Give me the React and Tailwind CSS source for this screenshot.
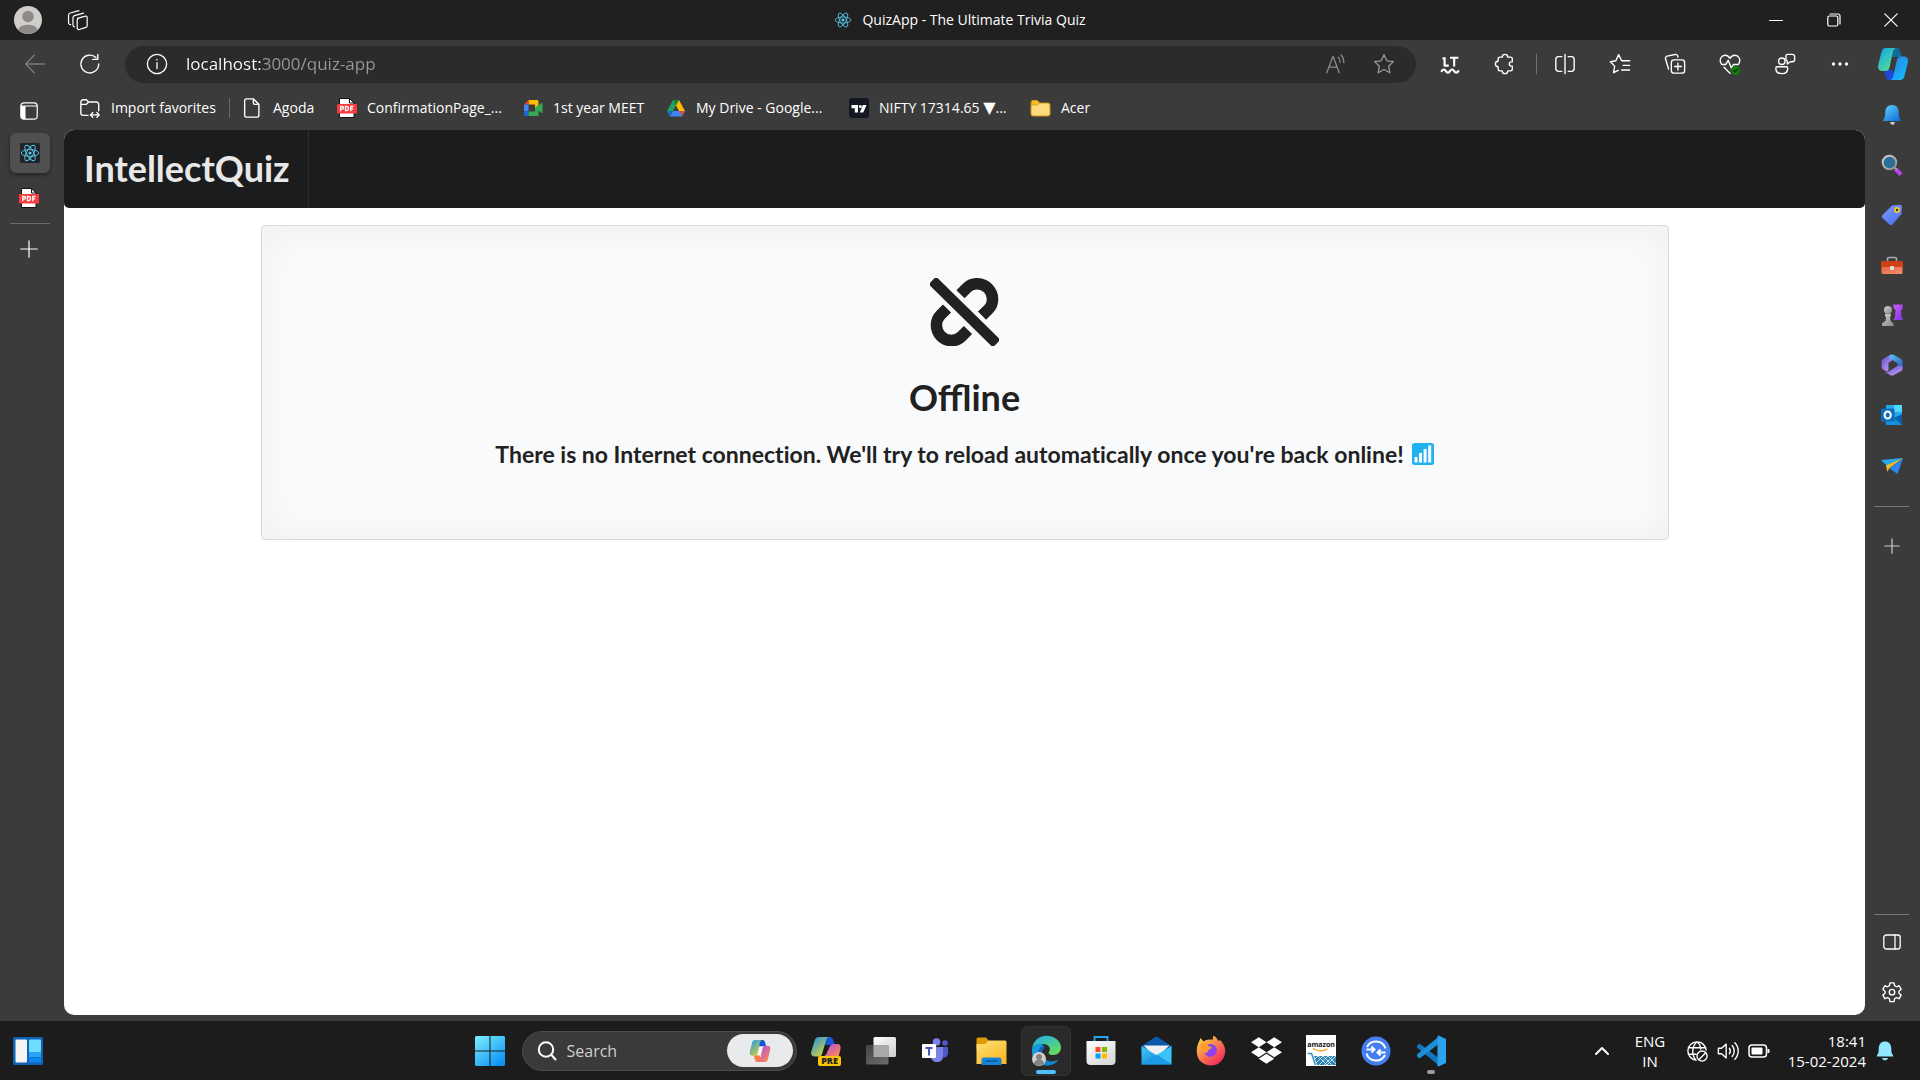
import React from "react";
import { FaDropbox } from "react-icons/fa";

function Line({ children, size = 22, box = 24, w = 1.5, className = "" }) {
  return (
    <svg
      width={size}
      height={size}
      viewBox={`0 0 ${box} ${box}`}
      fill="none"
      stroke="currentColor"
      strokeWidth={w}
      strokeLinecap="round"
      strokeLinejoin="round"
      className={`shrink-0 ${className}`}
      aria-hidden="true"
    >
      {children}
    </svg>
  );
}

function Art({ children, w = 22, h = w, vb = "0 0 24 24", className = "" }) {
  return (
    <svg width={w} height={h} viewBox={vb} fill="none" className={`shrink-0 ${className}`} aria-hidden="true">
      {children}
    </svg>
  );
}

function Gradients() {
  const stops = {
    gBell: ["#5fd4fb", "#1173dd"],
    gTag: ["#7fa0ff", "#4c6ef0"],
    gBox: ["#e8613a", "#f48a68"],
    gRook: ["#d25bfa", "#8038e8"],
    gPawn: ["#d0d0d0", "#8d8d8d"],
    gWin: ["#7cf0ff", "#0a93f5"],
    gFolder: ["#ffe07a", "#fbb91f"],
    gEdge: ["#1fa9f0", "#66e05a"],
    gEdgeDark: ["#0c4f9c", "#1290d8"],
    gFox: ["#ffe43d", "#f3205f"],
    gFoxIn: ["#6b4df0", "#a53bf0"],
    gMail: ["#3fd0fb", "#1479d4"],
    gCoGreen: ["#0aa4ee", "#5fe08a"],
    gCoBlue: ["#2b7be8", "#16bdfa"],
    gCoRain: ["#1492f5", "#e7d52b"],
    gCoPink: ["#b04af0", "#ff8a4a"],
    gOffA: ["#5b4fd0", "#c79bf2"],
    gOffB: ["#56c8f5", "#3358c8"],
    gStack: ["#ffffff", "#cfcfcf"],
    gGray: ["#444444", "#6a6a6a"],
    gBag: ["#fdfdfd", "#d8d8d8"],
    gHat: ["#d5d5d5", "#8f8f8f"],
  };
  return (
    <svg width="0" height="0" className="absolute" aria-hidden="true">
      <defs>
        {Object.entries(stops).map(([id, [a, b]]) => (
          <linearGradient key={id} id={id} x1="0" y1="0" x2="0.8" y2="1">
            <stop offset="0" stopColor={a} />
            <stop offset="1" stopColor={b} />
          </linearGradient>
        ))}
      </defs>
    </svg>
  );
}

const ReactLogo = ({ size = 18, box = false }) => (
  <Art w={size} vb="-12 -12 24 24">
    {box && <rect x="-12" y="-12" width="24" height="24" rx="2" fill="#20232a" />}
    <g stroke="#5cc9e6" strokeWidth="1.1">
      <ellipse rx="10.5" ry="4.1" />
      <ellipse rx="10.5" ry="4.1" transform="rotate(60)" />
      <ellipse rx="10.5" ry="4.1" transform="rotate(120)" />
    </g>
    <circle r="1.9" fill="#5cc9e6" />
  </Art>
);

const PdfIcon = () => (
  <Art w={20} vb="0 0 20 20">
    <path d="M2.500.5h10l4.500 4.500v14.500h-14.500z" fill="#fff" stroke="#111" />
    <path d="M12.500.5v4.500h4.500z" fill="#fff" stroke="#111" />
    <rect x="0" y="6" width="20" height="9.500" rx="1" fill="#f73c3f" />
    <g stroke="#fff" strokeWidth="1.300">
      <path d="M3.700 13.200V8.500h1.500a1.300 1.300 0 0 1 0 2.700H3.700M8.500 8.500v4.200h.9a2.100 2.100 0 0 0 0-4.200zM13.800 13.200V8.500h2.700M13.800 10.800h2.300" />
    </g>
  </Art>
);

const CopilotArt = ({ w = 30, h = 32, rainbow = false }) => (
  <Art w={w} h={h} vb="0 0 30 32">
    <path d="M10 0h9c2 0 3 2 3.500 4l1.500 5h-7l-5 0z" fill={rainbow ? "#1557d8" : "#126a9a"} />
    <path d="M20 32h-9c-2 0-3-2-3.500-4L6 22h8z" fill={rainbow ? "#ff7a45" : "#1b49d8"} />
    <path d="M8 0h9.500c-2 1-2.500 3-3.200 6l-2.500 12.500c-.7 3-2 4.500-4.500 4.500H4c-3.500 0-4.500-3-3.700-6.500L3.500 4C4.200 1.300 5.500 0 8 0z" fill={rainbow ? "url(#gCoRain)" : "url(#gCoGreen)"} />
    <path d="M22 32h-9.500c2-1 2.500-3 3.200-6L18.700 13c.7-3 2-4.500 4.500-4.500H26c3.500 0 4.500 3 3.700 6.500L26.500 28c-.7 2.700-2 4-4.500 4z" fill={rainbow ? "url(#gCoPink)" : "url(#gCoBlue)"} />
    {rainbow && <path d="M15 10h2.500l-3.300 12h-2.500z" fill="#fff" />}
  </Art>
);

const MeetIcon = () => (
  <Art w={20} vb="0 0 20 20">
    <path d="M5.500 2h8.500c1 0 1.500.5 1.500 1.500v4L12 10V6.500H5.500z" fill="#fbbc04" />
    <path d="M5.500 2v4.500H1z" fill="#ea4335" />
    <path d="M1 6.500h4.500v7H1z" fill="#4285f4" />
    <path d="M1 13.500h4.500V18H2.500C1.500 18 1 17.500 1 16.500z" fill="#1967d2" />
    <path d="M5.500 13.500H12V10l3.500 2.500v4c0 1-.5 1.500-1.500 1.500H5.500zM15.500 7.500L18.500 5c.5-.4 1-.1 1 .5v9c0 .6-.5.900-1 .5l-6.500-5z" fill="#34a853" />
  </Art>
);

const DriveIcon = () => (
  <Art w={20} vb="0 0 20 20">
    <path d="M7 2h6l6 11h-6z" fill="#fbbc04" />
    <path d="M7 2l3 5.500L4 18.500 1 13z" fill="#1ea362" />
    <path d="M7 13h12l-3 5.500H4z" fill="#4285f4" />
    <path d="M13 2l-3 5.500L7 2z" fill="#188038" />
    <path d="M7 13l-3 5.500L1 13z" fill="#1967d2" />
    <path d="M13 13h6l-3 5.500z" fill="#ea4335" opacity=".8" />
  </Art>
);

const TradingIcon = () => (
  <Art w={20} vb="0 0 20 20">
    <rect width="20" height="20" rx="3" fill="#131722" />
    <path d="M2.500 7H9v7.500H5.800v-4.300H2.500zM13.800 7h3.700l-3.200 7.500h-3.500z" fill="#fff" />
    <circle cx="11.300" cy="8.600" r="1.500" fill="#fff" />
  </Art>
);

const YellowFolder = () => (
  <Art w={21} h={20} vb="0 0 21 20">
    <path d="M1 4.500A2 2 0 0 1 3 2.500h4l2.500 2.500H18a2 2 0 0 1 2 2v9a2 2 0 0 1-2 2H3a2 2 0 0 1-2-2z" fill="#ffdb7d" stroke="#c99412" />
    <path d="M1.500 7h6L9.500 5 7 2.500H3A1.500 1.500 0 0 0 1.500 4z" fill="#f5c026" stroke="#c99412" strokeWidth=".8" />
  </Art>
);

const ImportIcon = () => (
  <Line size={22} w={1.5}>
    <path d="M10 20H4.500A2.500 2.500 0 0 1 2 17.500v-12A2.500 2.500 0 0 1 4.500 3H8l2.500 2.500H19a2.500 2.500 0 0 1 2.500 2.500v7M2 8h6l2.500-2.500M12.500 19.500h9.500M15 17l-2.500 2.500L15 22M19.500 17l2.500 2.500-2.500 2.500" />
  </Line>
);

const PageIcon = () => (
  <Line size={22} w={1.5}>
    <path d="M6 2h7.500l6 6v12a2 2 0 0 1-2 2h-11.500a2 2 0 0 1-2-2V4a2 2 0 0 1 2-2zM13.500 2v4.500A1.500 1.500 0 0 0 15 8h4.500" />
  </Line>
);

const niftyLabel = (
  <span>
    NIFTY 17314.65 <span className="font-['DejaVu_Sans',sans-serif] text-base leading-4">▼</span>...
  </span>
);

const favorites = [
  { id: "agoda", label: "Agoda", icon: <PageIcon />, width: "w-[96px]" },
  { id: "confirmation", label: "ConfirmationPage_...", icon: <PdfIcon />, width: "w-[186px]" },
  { id: "meet", label: "1st year MEET", icon: <MeetIcon />, width: "w-[143px]" },
  { id: "drive", label: "My Drive - Google...", icon: <DriveIcon />, width: "w-[183px]" },
  { id: "nifty", label: niftyLabel, icon: <TradingIcon />, width: "w-[181px]" },
  { id: "acer", label: "Acer", icon: <YellowFolder />, width: "w-[70px]" },
];

function IconButton({ label, className = "", children }) {
  return (
    <button type="button" aria-label={label} className={`flex shrink-0 items-center justify-center ${className}`}>
      {children}
    </button>
  );
}

function TitleBar() {
  return (
    <header className="flex h-10 shrink-0 items-center bg-[#202020]">
      <div className="flex flex-1 items-center">
        <IconButton label="Profile" className="w-14">
          <Art w={28}>
            <circle cx="12" cy="12" r="12" fill="#d0cecb" />
            <circle cx="12" cy="9" r="5" fill="#8d8a88" />
            <path d="M3.500 20.400a9 6.500 0 0 1 17 0A12 12 0 0 1 3.500 20.400z" fill="#8d8a88" />
          </Art>
        </IconButton>
        <IconButton label="Workspaces" className="w-11">
          <Line size={22} w={1.3}>
            <path d="M11.500 10.300l8.500-2.500a1.500 1.500 0 0 1 2 1.400v9a2 2 0 0 1-1.500 1.900l-7 2.300a1.800 1.800 0 0 1-2.400-1.700v-8.500a2 2 0 0 1 1.400-1.900zM8 19.500a2 2 0 0 1-1.500-2V9.500a2.500 2.500 0 0 1 1.700-2.300L18 4.500M4 17a2 2 0 0 1-2.300-2V6.800a2.500 2.500 0 0 1 1.800-2.400L13 1.700" />
          </Line>
        </IconButton>
      </div>
      <div className="flex items-center gap-2.5 text-sm text-white">
        <ReactLogo />
        <h1>QuizApp - The Ultimate Trivia Quiz</h1>
      </div>
      <div className="flex flex-1 justify-end">
        <IconButton label="Minimize" className="h-10 w-[58px]">
          <Line size={14} box={14} w={1}><path d="M.5 7.500h13" /></Line>
        </IconButton>
        <IconButton label="Restore" className="h-10 w-[57px]">
          <Line size={14} box={14} w={1.200}><rect x=".8" y="3" width="10" height="10" rx="1.500" /><path d="M3 1h8a2 2 0 0 1 2 2v8" /></Line>
        </IconButton>
        <IconButton label="Close" className="h-10 w-[58px]">
          <Line size={14} box={14} w={1.200}><path d="M.8.8l12.400 12.400M13.200.8L.8 13.200" /></Line>
        </IconButton>
      </div>
    </header>
  );
}

function Toolbar() {
  return (
    <div className="flex h-12 shrink-0 items-center">
      <IconButton label="Back" className="ml-2 w-[54px] text-[#7c7c7c]">
        <Line><path d="M22 12H2M11 2.500L2 12l9 9.500" /></Line>
      </IconButton>
      <IconButton label="Refresh" className="w-[55px]">
        <Line><path d="M21.500 12A9.700 9.700 0 1 1 18.500 5M20.500 1.500V7H15" /></Line>
      </IconButton>
      <div className="ml-2 flex h-[37px] flex-1 items-center rounded-full bg-[#2b2b2b] pl-[21px] pr-4">
        <IconButton label="Site information">
          <Line w={1.400}><circle cx="12" cy="12" r="10.500" /><path d="M12 10.500v6.500M12 7v.5" /></Line>
        </IconButton>
        <input
          aria-label="Address"
          defaultValue="localhost:3000/quiz-app"
          className="ml-[18px] min-w-0 flex-1 bg-[linear-gradient(90deg,#fff_75px,#989898_75px)] bg-clip-text text-[17px] text-transparent outline-none"
        />
        <IconButton label="Read aloud" className="w-12 text-[#8c8c8c]">
          <Line w={1.400}><path d="M2 21.500L8.500 4h.5l6.500 17.500M4.500 15.500h8.500M14.500 4.500a8 8 0 0 1 2 5.500M17.500 2a12 12 0 0 1 3 8.500" /></Line>
        </IconButton>
        <IconButton label="Add to favorites" className="ml-2 w-8 text-[#9a9a9a]">
          <Star />
        </IconButton>
      </div>
      <div className="ml-1.5 flex items-center">
        <IconButton label="LanguageTool" className="w-[55px]">
          <Line size={20} w={2.600}>
            <path d="M5.500 4v10h5M12 4.500h10M17 4.500v10.500M3 5.300h3" strokeLinecap="butt" />
            <path d="M2 20.500c1.700-2.500 3.500-2.500 5 0s3.500 2.500 5 0 3.500-2.500 5 0 3.500 2.500 5 0" />
          </Line>
        </IconButton>
        <IconButton label="Extensions" className="w-[55px]">
          <Line><path d="M6.500 4.500H9a3 3 0 0 1 6 0h3a2 2 0 0 1 2 2v3.200h-1a2.300 2.300 0 0 0 0 4.600h1v3.200a2 2 0 0 1-2 2h-3a3 3 0 0 1-6 0H6.500a2 2 0 0 1-2-2V15a3 3 0 0 1 0-6V6.500a2 2 0 0 1 2-2z" /></Line>
        </IconButton>
        <div className="ml-1 h-5 w-px bg-[#707070]" />
        <IconButton label="Split screen" className="w-[55px]">
          <Line><path d="M12 1.500v21M8.500 4H5a3 3 0 0 0-3 3v10a3 3 0 0 0 3 3h3.500M15.500 4H19a3 3 0 0 1 3 3v10a3 3 0 0 1-3 3h-3.500" /></Line>
        </IconButton>
        <IconButton label="Favorites" className="w-[55px]">
          <Line><path d="M13.800 8.500L10.500 1.800 7.500 8.500 1.500 9.500l4.700 4.800L5 21.500l5-2.600M13.800 8.500h8.700M15.500 13.500h7M13.800 18.500h8.700" /></Line>
        </IconButton>
        <IconButton label="Collections" className="w-[55px]">
          <Line><rect x="8" y="7.500" width="14.500" height="14.500" rx="3" /><path d="M15.200 11v7.500M11.500 14.700H19M5 17.500L1.700 6.500a2.500 2.500 0 0 1 1.700-3.100L12 1.600a2.500 2.500 0 0 1 3 1.900l.2 1" /></Line>
        </IconButton>
        <IconButton label="Browser essentials" className="w-[55px]">
          <Line>
            <path d="M2.500 12C-.5 6.500 3 2.500 6.800 2.500c2.400 0 4.200 1.500 5.200 3.500 1-2 2.800-3.500 5.200-3.500 3.800 0 7.300 4 4.300 9.500M3 12.500h4.500L10 8l3.500 8.500 2.200-4H21M5.500 15.500L12 22" />
            <circle cx="18" cy="19" r="5" fill="#107c10" stroke="none" />
            <path d="M16 19l1.500 1.500L20.300 17.500" stroke="#0a3d0a" />
          </Line>
        </IconButton>
        <IconButton label="Share" className="w-[55px]">
          <Line><circle cx="8.500" cy="9" r="3.500" /><path d="M3.500 15h10a1.500 1.500 0 0 1 1.500 1.500c0 3.500-2.500 6-6.500 6S2 20 2 16.500A1.500 1.500 0 0 1 3.500 15zM15 1.500h5a2.500 2.500 0 0 1 2.500 2.500v3A2.500 2.500 0 0 1 20 9.500h-2L14.500 12V9L13 7V3.500a2 2 0 0 1 2-2z" /></Line>
        </IconButton>
        <IconButton label="Settings and more" className="w-[55px]">
          <Art w={18} vb="0 0 18 18"><g fill="#fff"><circle cx="2.500" cy="9" r="1.700" /><circle cx="9" cy="9" r="1.700" /><circle cx="15.500" cy="9" r="1.700" /></g></Art>
        </IconButton>
        <IconButton label="Copilot" className="w-[53px] pr-0.5">
          <CopilotArt />
        </IconButton>
      </div>
    </div>
  );
}

const Star = () => (
  <Line w={1.400}><path d="M12 1.800l3.100 6.700 7.200.9-5.300 5 1.400 7.200L12 18l-6.400 3.600L7 14.400l-5.300-5 7.200-.9z" /></Line>
);

function LeftRail() {
  return (
    <nav aria-label="Vertical tabs" className="flex w-16 shrink-0 flex-col items-start pl-2.5">
      <IconButton label="Tab actions" className="h-[45px] w-[38px]">
        <Art w={18} vb="0 0 18 18">
          <path d="M1 4h16M4 .8h10A3.200 3.200 0 0 1 17.200 4v10a3.200 3.200 0 0 1-3.200 3.200H4A3.200 3.200 0 0 1 .8 14V4A3.200 3.200 0 0 1 4 .8z" stroke="#fff" strokeWidth="1.200" />
          <path d="M1 4h4.500v13H3a2 2 0 0 1-2-2z" fill="#fff" />
        </Art>
      </IconButton>
      <IconButton label="QuizApp" className="size-10 rounded-md bg-[#505050] shadow-[0_2px_4px_rgba(0,0,0,0.4)]">
        <ReactLogo size={20} box />
      </IconButton>
      <IconButton label="PDF" className="h-[50px] w-[38px]">
        <PdfIcon />
      </IconButton>
      <div className="h-px w-10 bg-[#6b6b6b]" />
      <IconButton label="New tab" className="h-[50px] w-[38px]">
        <Line size={18} box={18} w={1.200}><path d="M9 .8v16.400M.8 9h16.400" /></Line>
      </IconButton>
    </nav>
  );
}

const sideApps = [
  ["Notifications", <Art w={20} h={24} vb="0 0 20 24"><path d="M8 19h5c-.5 2-1.300 2.800-2.500 2.800S8.500 21 8 19z" fill="#c9c9c9" /><path d="M10 2c4 0 6.500 2.800 6.700 6.500l.3 5 2 4.500H1l2-4.500.3-5C3.500 4.800 6 2 10 2z" fill="url(#gBell)" /></Art>],
  ["Search", <Art w={22} vb="0 0 22 22"><path d="M14.500 15l5.500 5.500" stroke="#c33cf0" strokeWidth="4" /><path d="M12 12l4 4" stroke="#9a9a9a" strokeWidth="2" /><circle cx="8.500" cy="8.500" r="6.800" fill="#286f93" stroke="url(#gHat)" strokeWidth="2" /></Art>],
  ["Shopping", <Art w={22} vb="0 0 22 22"><path d="M11 1.500l8-.8c1.200 0 2 .8 2 2l-.5 7.300-9 10.500c-1 .9-2 .9-3 0l-7-6.500c-.9-1-.9-2 0-3z" fill="url(#gTag)" /><circle cx="16" cy="6" r="2.100" stroke="#f7cb21" strokeWidth="1.800" fill="#333" /></Art>],
  ["Tools", <Art w={24} h={22} vb="0 0 24 22"><path d="M7.500 8V5a1.500 1.500 0 0 1 1.500-1.500h6A1.500 1.500 0 0 1 16.500 5v3" stroke="#aaa" strokeWidth="1.600" /><rect x="1.500" y="10" width="21" height="10" rx="1.500" fill="url(#gBox)" /><rect x="1" y="7" width="22" height="6" rx="1" fill="#cf4016" /><rect x="10" y="12" width="4" height="4" rx="1" fill="#ddd" /></Art>],
  ["Games", <Art w={24} h={24} vb="0 0 24 24"><path d="M13.500 1l2.500 1 2-1 2 1 2.500-1v5l-1.500 2 .5 6 2 3h-10l1.500-3 .5-7-2-2z" fill="url(#gRook)" /><circle cx="8" cy="7" r="4" fill="url(#gPawn)" /><path d="M5 11h6v2l-1 1 .5 4 3 2.500V23H2v-2.500L5.500 18l.5-4-1-1z" fill="url(#gPawn)" /></Art>],
  ["Microsoft 365", <Art w={22} vb="0 0 22 22"><path d="M.7 7.500c0-1 .5-2 1.500-2.600L9 1l2.500 1v4L7.500 9v7.500l-2 1-3.500-2c-.8-.5-1.300-1.300-1.300-2.300z" fill="url(#gOffA)" /><path d="M8.500 1.200C10 .3 12 .3 13.500 1.200l6.500 3.800c1 .7 1.500 1.500 1.500 2.500v7.500l-5-2.500V9l-8-4.500z" fill="url(#gOffB)" /><path d="M21.500 12v3c0 1-.5 1.500-1.300 2L13 21c-1.300.7-2.700.7-4 0l-5.500-3.200c1 .4 3 .2 4-.4l9-5.400z" fill="url(#gOffA)" /></Art>],
  ["Outlook", <Art w={22} vb="0 0 22 22"><path d="M5 1h16v13H5z" fill="#28a8ea" /><path d="M13 1h8v7h-8z" fill="#50d9ff" /><path d="M4 11l9 3 8-3v10H5z" fill="#1490df" /><path d="M13 14l8-4v11z" fill="#0a5ca8" /><rect x="0" y="4.500" width="13.500" height="13" rx="1.200" fill="#0f6cbd" /><ellipse cx="6.700" cy="11" rx="3.100" ry="3.500" stroke="#fff" strokeWidth="2" /></Art>],
  ["Drop", <Art w={22} vb="0 0 22 22"><path d="M0 6L22 4 6 12z" fill="#2aa6ee" /><path d="M5 11.500L22 4 8 14.500 6.500 18z" fill="#f6bd27" /><path d="M22 4l-5.500 16-8-5.500z" fill="#2e86ef" /></Art>],
];

function RightRail() {
  return (
    <aside className="flex w-[55px] shrink-0 flex-col items-center pt-0.5 pr-0.5">
      {sideApps.map(([label, art]) => (
        <IconButton key={label} label={label} className="h-[50px] w-10">
          {art}
        </IconButton>
      ))}
      <div className="mt-4 h-px w-[35px] bg-[#777]" />
      <IconButton label="Customize" className="mt-3.5 h-[50px] w-10 text-[#ccc]">
        <Line size={16} box={16} w={1.200}><path d="M8 .8v14.400M.8 8h14.400" /></Line>
      </IconButton>
      <div className="mt-auto h-px w-[35px] bg-[#777]" />
      <IconButton label="Hide sidebar" className="mt-0.5 h-[50px] w-10">
        <Line size={18} box={18} w={1.300}><rect x=".8" y="2" width="16.400" height="14" rx="2.500" /><path d="M12 2v14" /></Line>
      </IconButton>
      <IconButton label="Settings" className="mb-1 h-[50px] w-10">
        <Line size={22} w={1.500}>
          <path d="M9.800 2h4.400l.6 3.100 2 1.200 3-1.100 2.200 3.900-2.400 2v2.300l2.400 2-2.200 3.900-3-1.100-2 1.200-.6 3.100H9.800l-.6-3.100-2-1.200-3 1.100L2 15.400l2.400-2v-2.300L2 9.100l2.200-3.900 3 1.100 2-1.200z" />
          <circle cx="12" cy="12.200" r="3" />
        </Line>
      </IconButton>
    </aside>
  );
}

function FavoritesBar() {
  return (
    <nav aria-label="Favorites bar" className="flex h-[42px] shrink-0 items-center overflow-hidden pb-0.5 pl-[15px] text-sm whitespace-nowrap">
      <button type="button" className="flex w-[150px] shrink-0 items-center gap-2.5">
        <ImportIcon />
        Import favorites
      </button>
      <div className="mr-[11px] h-5 w-px shrink-0 bg-[#666]" />
      {favorites.map((f) => (
        <a key={f.id} href="#" className={`flex shrink-0 items-center gap-2.5 ${f.width}`}>
          {f.icon}
          {f.label}
        </a>
      ))}
    </nav>
  );
}

function OfflinePage() {
  return (
    <main className="flex-1 overflow-hidden rounded-[10px] bg-white font-[Lato,sans-serif] text-[#212121]">
      <div className="flex h-[78px] rounded-b-[5px] bg-[#1b1c1d]">
        <a href="#" className="flex items-center border-r border-[#2c2d2e] pr-[18px] pb-0.5 pl-5 text-4xl font-bold text-[#e8e8e8]">
          IntellectQuiz
        </a>
      </div>
      <section className="mx-auto mt-[17px] flex h-[315px] w-[calc(100%-393px)] flex-col items-center rounded border border-[#d8dadb] bg-[#f9fafb] pt-[52px] shadow-[inset_0_2px_36px_rgba(34,36,38,0.05)]">
        <Art w={69} h={68} vb="0 0 69 68">
          <g stroke="#212121" strokeWidth="11.500">
            <path d="M30.500 16.300L37 9.800C42.500 4.300 52 4.300 58 10.300s6 15.500.5 21L52 37.700" />
            <path d="M17 30.500L10.500 37C5 42.500 5 52 10.800 58s15 6 20.700.5l6.500-6.500" />
          </g>
          <rect x="-10.500" y="28.700" width="90" height="10.600" rx="2" fill="#212121" transform="rotate(44.500 34.500 34)" />
        </Art>
        <h2 className="mt-[29px] text-4xl leading-[45px] font-bold">Offline</h2>
        <p className="mt-[18px] flex items-center gap-2 text-[23px] leading-8 font-bold [font-variant-ligatures:none]">
          There is no Internet connection. We'll try to reload automatically once you're back online!
          <Art w={22} h={22} vb="0 0 22 22">
            <rect width="22" height="22" rx="2.500" fill="#20b2f0" />
            <path d="M2.500 14h3v5.500h-3zM7 10h3v9.500H7zM11.600 6h3v13.500h-3zM16.200 2.500h3v17h-3z" fill="#fff" />
          </Art>
        </p>
      </section>
    </main>
  );
}

const taskApps = [
  ["Copilot preview", <Art w={30} h={30} vb="0 0 30 30"><path d="M10 1h9c2 0 3 2 3.500 4l1 4h-9z" fill="#1557d8" /><path d="M8 1h9.500c-2 1-2.500 3-3.200 6l-3 10c-.7 3-2 3.500-4.500 3.500H4c-3.500 0-4.500-2-3.700-5L3.500 5C4.200 2.300 5.500 1 8 1z" fill="url(#gCoRain)" /><path d="M13 20c2-1 2.500-2 3.200-4l2.300-5c.7-2 2-3 4.500-3H26c3 0 4 2 3.500 5l-2 8z" fill="url(#gCoPink)" /><rect x="7" y="20" width="23" height="10" rx="2" fill="#fdc500" /><text x="18.500" y="28.300" textAnchor="middle" fontSize="9" fontWeight="800" fontFamily="Open Sans, sans-serif" fill="#222">PRE</text></Art>],
  ["Task view", <Art w={30} h={28} vb="0 0 30 28"><rect x="7.500" y="0" width="22.500" height="20" rx="1.500" fill="url(#gStack)" /><rect x="0" y="8" width="22.500" height="19.500" rx="1.500" fill="url(#gGray)" /><rect x="7.500" y="8" width="15" height="12" fill="#a9a9a9" /></Art>],
  ["Teams", <Art w={30} h={26} vb="0 0 30 26"><circle cx="15.500" cy="4" r="3.800" fill="#7b83eb" /><circle cx="24" cy="5" r="2.800" fill="#5059c9" /><path d="M19 9h8v6a4.500 4.500 0 0 1-4.500 4.500H19z" fill="#5059c9" /><path d="M10 9h12v9c0 4-2.500 6-6 6s-6-2-6-6z" fill="#7b83eb" /><rect x="1" y="6" width="14" height="14" rx="1" fill="#fff" /><path d="M4.500 10h7M8 10v7.500" stroke="#4b53bc" strokeWidth="2" /></Art>],
  ["File Explorer", <Art w={31} h={28} vb="0 0 31 28"><path d="M.5 2A1.500 1.500 0 0 1 2 .5h8L13 4v8H.5z" fill="#dc9a04" /><path d="M.5 7h8.500l3.500-3.500H29A1.500 1.500 0 0 1 30.500 5v22H.5z" fill="url(#gFolder)" /><path d="M5.500 28v-5a2.500 2.500 0 0 1 2.500-2.500h15a2.500 2.500 0 0 1 2.500 2.500v5z" fill="#1583d6" /><path d="M9.500 24h12" stroke="#064a90" strokeWidth="1.200" /></Art>],
  ["Edge", <Art w={31} h={31} vb="0 0 31 31"><path d="M1 14C2 6 8 .8 15.500.8 23.500.8 30 6 30 12.500c0 4.500-3.500 7.500-8 7.500-4 0-5-1.500-4-3 2.500-4-.5-8-6-8S2 11 1 14z" fill="url(#gEdge)" /><path d="M1 14c2-4 6-5.500 10-4.500 3 .8 3 3 1.500 4.500-3 4-1 10 5 12 4 1.300 8-.3 10-1.500C25 28.500 20.500 30.500 15.500 30.500 7 30.500 0 24 1 14z" fill="url(#gEdgeDark)" /><path d="M1 14C4.500 8 10 8 12.500 10.500 6 13 5 22 12 30 5 29 .3 21.500 1 14z" fill="#1699e0" /><circle cx="8" cy="24" r="7" fill="#d2d0ce" /><circle cx="8" cy="22" r="3" fill="#858381" /><path d="M3 28.500a5 4 0 0 1 10 0A7 7 0 0 1 3 28.500z" fill="#858381" /></Art>],
  ["Microsoft Store", <Art w={30} h={31} vb="0 0 30 31"><path d="M8.500 7V2h13v5" stroke="#24a6ee" strokeWidth="1.800" /><path d="M.5 6h29v20a4 4 0 0 1-4 4h-21a4 4 0 0 1-4-4z" fill="url(#gBag)" /><path d="M9.500 12h5v5h-5z" fill="#f25022" /><path d="M16 12h5v5h-5z" fill="#7fba00" /><path d="M9.500 18.500h5v5h-5z" fill="#00a4ef" /><path d="M16 18.500h5v5h-5z" fill="#ffb900" /></Art>],
  ["Mail", <Art w={31} h={29} vb="0 0 31 29"><path d="M.5 10L15.500.3 30.500 10v8H.5z" fill="#0b57a8" /><path d="M2.500 9.500h26L17 20h-4z" fill="#eef2f5" /><path d="M.5 10l30 18.500H.5z" fill="url(#gMail)" /><path d="M30.500 10v18.500L15.500 19z" fill="#38c6f8" /><path d="M.5 28.500l15-10 15 10z" fill="#1b9be8" /></Art>],
  ["Firefox", <Art w={30} h={31} vb="0 0 30 31"><path d="M2 9l2.500-6 3 3.500c2-1.500 6-2.500 9-1.500L17.500.5C20 2 21.500 4 22 6l2-1c4 4 6 9 5 13.500C27.500 26 22 30.500 15 30.500S1 25.500.8 17.500C.7 14 1 11.500 2 9z" fill="url(#gFox)" /><circle cx="14.500" cy="15.500" r="6.500" fill="url(#gFoxIn)" /><path d="M4 10c4-2.500 7-1 9.500 1.500 2 .2 3 .8 2 2-2 .5-3.500 1.500-4 3.500-1.500 1.500-3 1-5-1z" fill="#ff9a2e" /></Art>],
  ["Dropbox", <FaDropbox size={31} color="#fff" />],
  ["Amazon", <Art w={30} h={31} vb="0 0 30 31"><rect width="30" height="31" fill="#fff" /><text x="15" y="12" textAnchor="middle" fontSize="7" fontWeight="700" fontFamily="Open Sans, sans-serif" fill="#111">amazon</text><path d="M7 13.500c5 3 10 3 14.500.5" stroke="#f59b1c" strokeWidth="1.300" /><path d="M1.500 18.500h4l4 11.500" stroke="#3e8ebd" strokeWidth="1.500" /><path d="M8 21h22v9H11z" fill="#2e83b5" /><path d="M9 24l3-3 9 9 9-9M10 28l7-7 9 9M13 30l9-9 8 8M18 30l9-9" stroke="#d2eaf5" strokeWidth=".9" /></Art>],
  ["ShareMe", <Art w={30} h={30} vb="0 0 30 30"><circle cx="15" cy="15" r="14.500" fill="#437ff0" /><g stroke="#fff" strokeWidth="2"><path d="M6 11A10 10 0 0 1 24.500 12.500M24 19A10 10 0 0 1 5.500 17.500" /><path d="M5.500 13.500h7M10.500 10.500l3 3-3 3M24.500 16.500h-7M19.500 19.500l-3-3 3-3" /></g></Art>],
  ["Visual Studio Code", <Art w={31} h={32} vb="0 0 31 32"><path d="M1 10.500l2.500-2L24 24v7.500L1 12.500z" fill="#1177bd" /><path d="M1 21.500l2.500 2L24 8V.5L1 19.500z" fill="#1b8fd8" /><path d="M22.500.5L30 4v24l-7.500 3.500c-.7-.2-1-.6-1-1.500V2c0-.9.300-1.300 1-1.500z" fill="#2aa4f0" /></Art>],
];

function Taskbar() {
  return (
    <footer className="flex h-[59px] shrink-0 items-center bg-[#1c1c1c]">
      <div className="flex flex-1 items-center">
        <IconButton label="Widgets" className="w-14">
          <Art w={30} h={28} vb="0 0 30 28"><rect width="30" height="28" rx="1.500" fill="#0f62b4" /><rect x="2.500" y="2.500" width="11.500" height="23" rx="1" fill="#f4f4f4" /><rect x="16" y="2.500" width="12" height="12.500" rx="1" fill="#6edcff" /><path d="M16 15h12v5H16z" fill="#2aa2fa" /><path d="M16 20.500h12v5H16z" fill="#0c86ee" /></Art>
        </IconButton>
      </div>
      <div className="flex items-center pr-1">
        <IconButton label="Start" className="w-16">
          <Art w={30} h={30} vb="0 0 30 30"><path d="M1 0h13.500v14.500H0V1zM15.500 0H29l1 1v13.500H15.500zM0 15.500h14.500V30H1l-1-1zM15.500 15.500H30V29l-1 1H15.500z" fill="url(#gWin)" /></Art>
        </IconButton>
        <div className="flex h-10 w-[275px] items-center rounded-full border border-[#4c4c4c] bg-[#3a3a3a] pr-[3px] pl-3.5">
          <Line size={20} box={20} w={2}><circle cx="9" cy="8.500" r="7.200" /><path d="M14.500 14l4 4.500" /></Line>
          <input
            type="search"
            aria-label="Search"
            placeholder="Search"
            className="ml-2.5 min-w-0 flex-1 bg-transparent text-base outline-none placeholder:text-[#cfcfcf]"
          />
          <IconButton label="Open Copilot" className="h-[33px] w-[66px] rounded-full bg-[#e9eaec]">
            <CopilotArt w={24} h={22} rainbow />
          </IconButton>
        </div>
        <div className="ml-0.5 flex items-center">
          {taskApps.map(([label, art]) => (
            <div key={label} className="relative flex w-[55px] justify-center">
              <IconButton
                label={label}
                className={label === "Edge" ? "size-[50px] rounded-md border border-[#323232] bg-[#2a2a2a]" : "size-[50px]"}
              >
                {art}
              </IconButton>
              {label === "Edge" && <span className="absolute bottom-0.5 h-1 w-5 rounded-full bg-[#4cc2ff]" />}
              {label === "Visual Studio Code" && <span className="absolute bottom-0.5 h-1 w-2 rounded-full bg-[#9a9a9a]" />}
            </div>
          ))}
        </div>
      </div>
      <div className="flex flex-1 items-center justify-end text-[15px] leading-5">
        <IconButton label="Show hidden icons" className="w-10">
          <Line size={16} box={16} w={2}><path d="M2 11l6-6 6 6" /></Line>
        </IconButton>
        <button type="button" className="w-14 text-center">
          ENG
          <br />
          IN
        </button>
        <div className="ml-2 flex w-[84px] items-center justify-between">
          <Line size={22} w={1.500}>
            <path d="M11 22A10 10 0 1 1 22 11M2.500 8.500h19M2.500 15.500H11M11 22c-5-5-5-15 1-20 2.500 2 4 5 4 8" />
            <circle cx="17.500" cy="17.500" r="5.500" /><path d="M14 21.500l7.500-7.500" />
          </Line>
          <Line size={22} w={1.500}>
            <path d="M1.500 9h3.500l5-4.500v15L5 15H1.500zM13.500 9a5 5 0 0 1 0 6M16.500 6a9 9 0 0 1 0 12M19.500 3a13 13 0 0 1 0 18" />
          </Line>
          <Art w={22} vb="0 0 22 22"><rect x="1" y="5" width="17.500" height="12" rx="3" stroke="#fff" strokeWidth="1.500" /><rect x="3.500" y="7.500" width="11" height="7" rx="1" fill="#fff" /><path d="M19.500 9h1a1 1 0 0 1 1 1v2a1 1 0 0 1-1 1h-1z" fill="#fff" /></Art>
        </div>
        <time className="ml-3 w-[84px] text-right whitespace-nowrap">
          18:41
          <br />
          15-02-2024
        </time>
        <IconButton label="Notification center" className="mr-4 w-[38px]">
          <Art w={18} h={20} vb="0 0 18 20"><path d="M9 .5c3.800 0 6 2.700 6.200 6l.3 5 1.700 3.200v.8H.8v-.8l1.700-3.200.3-5C3 3.200 5.200.5 9 .5zM6 17h6c-.5 1.500-1.500 2.300-3 2.300S6.500 18.500 6 17z" fill="#8fe8ff" /></Art>
        </IconButton>
      </div>
    </footer>
  );
}

export default function App() {
  return (
    <div className="flex min-h-screen flex-col bg-[#3b3b3b] font-['Open_Sans',sans-serif] text-white">
      <Gradients />
      <TitleBar />
      <Toolbar />
      <div className="flex flex-1">
        <LeftRail />
        <div className="flex min-w-0 flex-1 flex-col pb-1.5">
          <FavoritesBar />
          <OfflinePage />
        </div>
        <RightRail />
      </div>
      <Taskbar />
    </div>
  );
}
